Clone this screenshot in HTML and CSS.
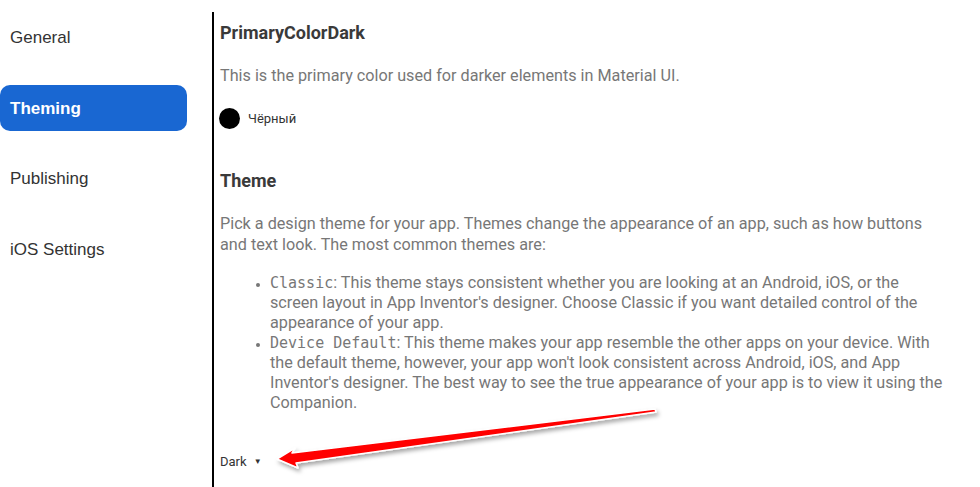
FILE: index.html
```html
<!DOCTYPE html>
<html>
<head>
<meta charset="utf-8">
<link rel="stylesheet" href="styles.css">
</head>
<body>
<div class="layout">
  <nav class="sidebar">
    <div class="nav-item">General</div>
    <div class="nav-item active">Theming</div>
    <div class="nav-item">Publishing</div>
    <div class="nav-item">iOS Settings</div>
  </nav>
  <main class="content">
    <h3 class="prop-title">PrimaryColorDark</h3>
    <p class="desc">This is the primary color used for darker elements in Material UI.</p>
    <div class="color-row"><span class="swatch"></span><span class="color-name">Чёрный</span></div>
    <h3 class="prop-title theme-title">Theme</h3>
    <p class="desc para">Pick a design theme for your app. Themes change the appearance of an app, such as how buttons<br>and text look. The most common themes are:</p>
    <ul class="themes">
      <li><code>Classic</code>: This theme stays consistent whether you are looking at an Android, iOS, or the<br>screen layout in App Inventor's designer. Choose Classic if you want detailed control of the<br>appearance of your app.</li>
      <li><code>Device Default</code>: This theme makes your app resemble the other apps on your device. With<br>the default theme, however, your app won't look consistent across Android, iOS, and App<br>Inventor's designer. The best way to see the true appearance of your app is to view it using the<br>Companion.</li>
    </ul>
    <div class="dropdown">Dark <span class="caret">▼</span></div>
  </main>
</div>
<svg class="arrow" width="980" height="487" viewBox="0 0 980 487">
  <defs>
    <filter id="sh" x="-10%" y="-50%" width="120%" height="200%">
      <feDropShadow dx="2" dy="3" stdDeviation="2" flood-color="#000" flood-opacity="0.35"/>
    </filter>
  </defs>
  <polygon points="277,459 295,448 292,453 655,409 656,412 296,463 298,468" fill="#ff0000" stroke="#ffffff" stroke-width="1.5" stroke-linejoin="round" filter="url(#sh)"/>
</svg>
</body>
</html>
```
FILE: styles.css
```css
html, body {
  margin: 0;
  padding: 0;
  background: #ffffff;
}
body {
  width: 980px;
  height: 487px;
  overflow: hidden;
  position: relative;
}
.layout {
  display: flex;
  align-items: flex-start;
}
.sidebar {
  width: 187px;
  padding-top: 15px;
  margin-right: 25px;
  display: flex;
  flex-direction: column;
  gap: 25px;
  font-family: "Liberation Sans", Arial, sans-serif;
  font-size: 17px;
  color: #333333;
}
.nav-item {
  height: 46px;
  line-height: 46px;
  padding-left: 10px;
}
.nav-item.active {
  margin-top: -1px;
  height: 46px;
  line-height: 47px;
  background: #1967d2;
  color: #ffffff;
  font-weight: bold;
  border-radius: 10px;
}
.content {
  margin-top: 12px;
  height: 475px;
  border-left: 2px solid #000000;
  padding-left: 6px;
  width: 760px;
  font-family: Roboto, "Noto Sans", sans-serif;
  color: #777777;
  box-sizing: border-box;
  white-space: nowrap;
}
.prop-title {
  margin: 0;
  padding-top: 10px;
  font-size: 18px;
  font-weight: bold;
  color: #3a3a3a;
  line-height: 22px;
}
.desc {
  margin: 21px 0 0;
  font-size: 16.2px;
  line-height: 22px;
}
.color-row {
  display: flex;
  align-items: center;
  gap: 8px;
  margin-top: 21px;
  height: 20px;
}
.swatch {
  width: 21px;
  height: 21px;
  border-radius: 50%;
  background: #000000;
  margin-left: -1px;
}
.color-name {
  font-size: 13px;
  color: #333333;
}
.theme-title {
  padding-top: 42px;
}
.para {
  margin-top: 21px;
  line-height: 21px;
}
.themes {
  margin: 18px 0 0;
  padding-left: 50px;
  font-size: 16.2px;
  line-height: 20px;
}
.themes li::marker {
  font-size: 12px;
}
.themes code {
  font-family: "DejaVu Sans Mono", monospace;
  font-size: 15px;
  color: #777777;
}
.dropdown {
  margin-top: 41px;
  font-size: 13px;
  color: #333333;
}
.caret {
  font-size: 8px;
  margin-left: 4px;
  vertical-align: 2px;
}
.arrow {
  position: absolute;
  left: 0;
  top: 0;
  pointer-events: none;
}
```
